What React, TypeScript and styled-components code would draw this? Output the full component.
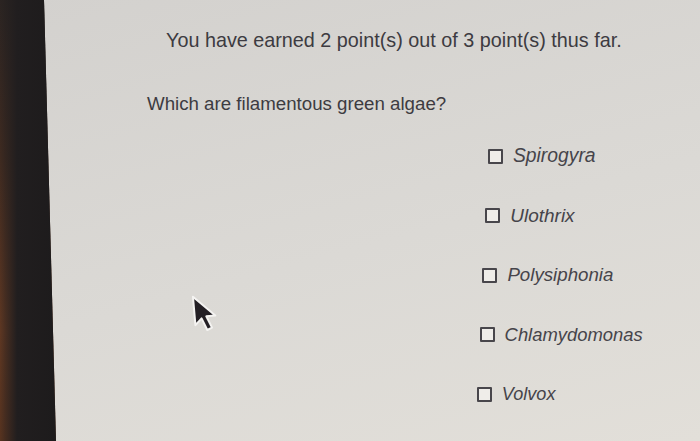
import React from "react";
import styled, { createGlobalStyle } from "styled-components";

const Global = createGlobalStyle`
  html, body {
    margin: 0;
    padding: 0;
    width: 700px;
    height: 441px;
    overflow: hidden;
    background: #d9d7d3;
  }
  * { box-sizing: border-box; }
`;

const Frame = styled.div`
  position: relative;
  display: flex;
  width: 700px;
  height: 441px;
  background: linear-gradient(165deg, #d3d1ce 0%, #dbd9d5 55%, #e2dfd9 100%);
  font-family: "Liberation Sans", Arial, Helvetica, sans-serif;
  overflow: hidden;
`;

const Bezel = styled.div`
  flex: 0 0 56px;
  height: 100%;
  clip-path: polygon(0 0, 44px 0, 56px 100%, 0 100%);
  background:
    linear-gradient(to right, rgba(33, 30, 31, 0) 0px, rgba(33, 30, 31, 0.4) 6px, #211e1f 17px, #1d1b1c 100%),
    linear-gradient(to bottom, #2b2422 0%, #3e2a20 35%, #5e3722 75%, #57331f 100%);
`;

const Screen = styled.main`
  flex: 1;
  display: flex;
  flex-direction: column;
  padding-top: 28px;
  color: #3d3b41;
`;

const Score = styled.p`
  margin: 0 0 0 110px;
  font-size: 19.8px;
  line-height: 24px;
  white-space: nowrap;
`;

const Question = styled.p`
  margin: 40px 0 0 91px;
  font-size: 18.7px;
  line-height: 24px;
  white-space: nowrap;
`;

const Options = styled.ul`
  list-style: none;
  margin: 28px 0 0 432px;
  padding: 0;
  display: flex;
  flex-direction: column;
  gap: 35.5px;
`;

const OptionRow = styled.li<{ $shift: number; $size: number }>`
  display: flex;
  align-items: center;
  gap: 10px;
  height: 24px;
  margin-left: ${(p) => p.$shift}px;
  font-size: ${(p) => p.$size}px;
  font-style: italic;
  color: #46444a;
  white-space: nowrap;
`;

const Box = styled.span`
  flex: 0 0 15px;
  width: 15px;
  height: 15px;
  border: 2px solid #48464b;
  border-radius: 1px;
  background: #efede9;
`;

const Cursor = styled.svg`
  position: absolute;
  left: 192px;
  top: 294px;
  width: 27px;
  height: 42px;
  transform: rotate(-5deg);
`;

const options = ["Spirogyra", "Ulothrix", "Polysiphonia", "Chlamydomonas", "Volvox"];

export default function App() {
  return (
    <>
      <Global />
      <Frame>
        <Bezel />
        <Screen>
          <Score>You have earned 2 point(s) out of 3 point(s) thus far.</Score>
          <Question>Which are filamentous green algae?</Question>
          <Options>
            {options.map((o, i) => (
              <OptionRow key={o} $shift={-2.8 * i} $size={19.3 - 0.3 * i}>
                <Box />
                {o}
              </OptionRow>
            ))}
          </Options>
        </Screen>
        <Cursor viewBox="0 0 16 25">
          <path
            d="M1.5 1 L1.5 18 L5.5 14.3 L8.3 21.5 L11.2 20.3 L8.4 13.3 L13.8 13.3 Z"
            fill="#231f24"
            stroke="#f4f3f1"
            strokeWidth="1.2"
            strokeLinejoin="round"
          />
        </Cursor>
      </Frame>
    </>
  );
}
